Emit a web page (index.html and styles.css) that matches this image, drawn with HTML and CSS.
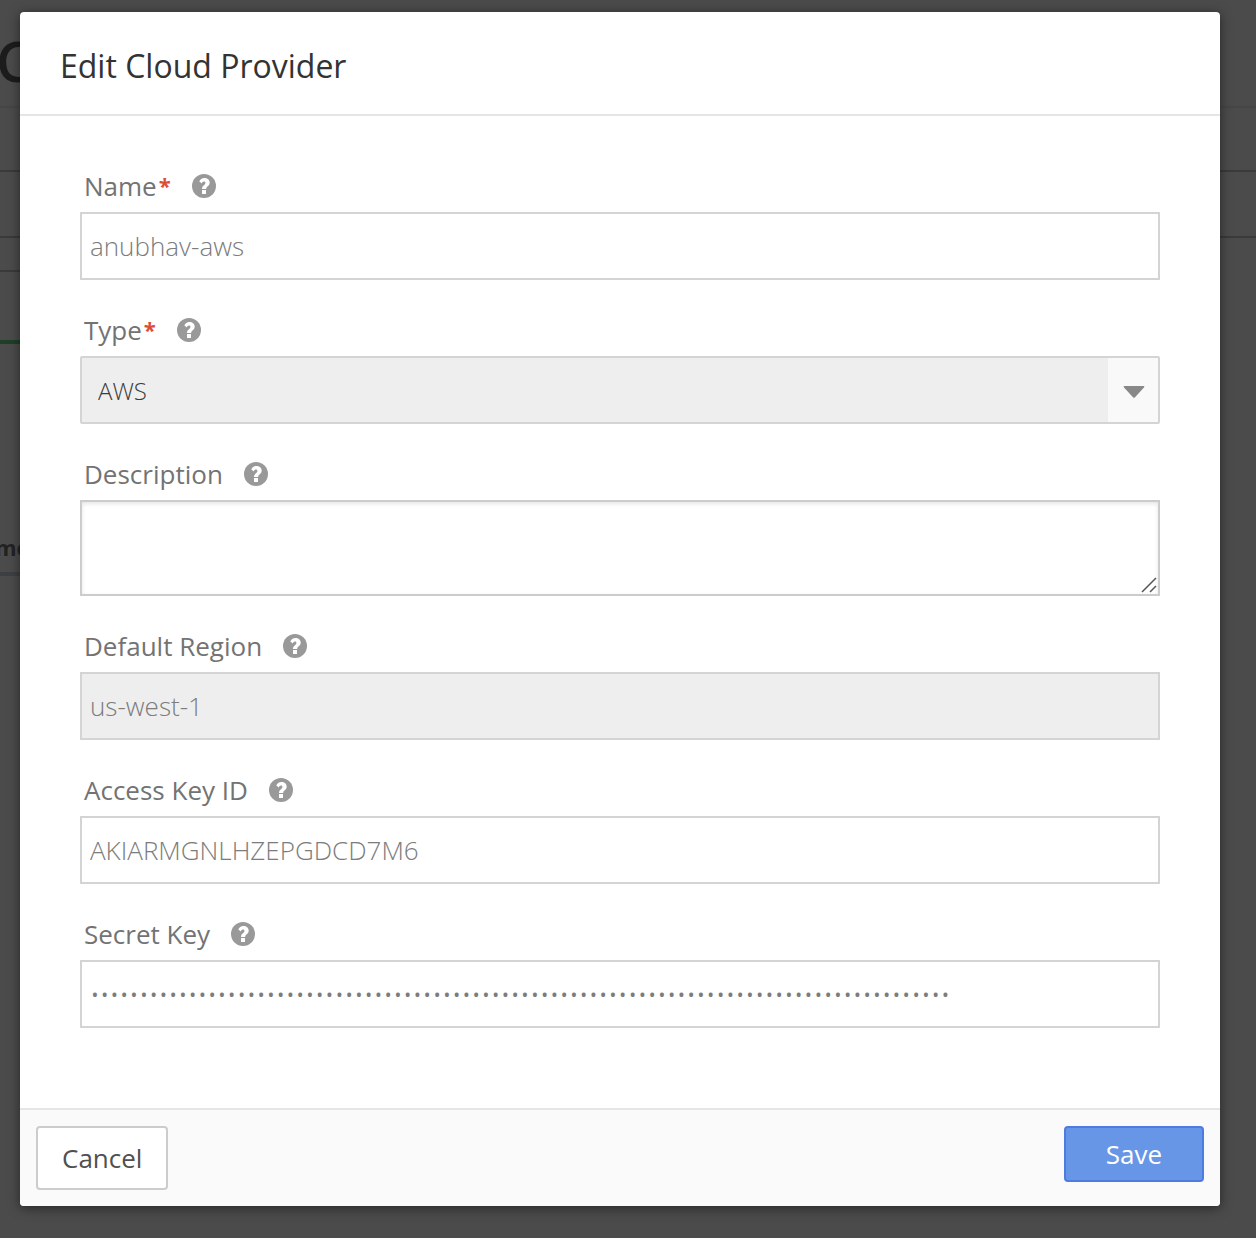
FILE: index.html
```html
<!DOCTYPE html>
<html lang="en">
<head>
  <meta charset="utf-8">
  <meta name="viewport" content="width=device-width, initial-scale=1">
  <title>Edit Cloud Provider</title>
  <link rel="stylesheet" href="styles.css">
</head>
<body>
  <svg class="sprite" aria-hidden="true">
    <symbol id="help" viewBox="0 0 24 24">
      <circle cx="12" cy="12" r="12" fill="#999"/>
      <path d="M7.300 7.600C8.300 5.200 9.900 4 12.300 4C15.500 4 17.700 6 17.700 8.600C17.700 12.300 14.200 12.300 14.200 15H10C10 11.300 13.400 11.200 13.400 9C13.400 8.100 12.800 7.600 11.900 7.600C10.900 7.600 10.300 8.300 9.900 9.400Z" fill="#fff"/>
      <rect x="10" y="16" width="4" height="4" fill="#fff"/>
    </symbol>
  </svg>

  <div class="page" aria-hidden="true">
    <div class="page-title">C</div>
    <div class="page-row"></div>
    <div class="page-row"></div>
    <div class="page-side">
      <div class="page-strip"></div>
      <div class="page-tabs"></div>
      <div class="page-columns">me</div>
    </div>
  </div>

  <form class="modal" role="dialog" aria-labelledby="modal-title">
    <header class="modal-header">
      <h1 id="modal-title">Edit Cloud Provider</h1>
    </header>

    <div class="modal-body">
      <div class="field">
        <div class="field-label">
          <label for="name">Name<span class="required">*</span></label>
          <svg class="help"><use href="#help"/></svg>
        </div>
        <input class="control" id="name" type="text" value="anubhav-aws">
      </div>

      <div class="field">
        <div class="field-label">
          <label for="type">Type<span class="required">*</span></label>
          <svg class="help"><use href="#help"/></svg>
        </div>
        <div class="stack">
          <select class="control select" id="type" disabled>
            <option>AWS</option>
          </select>
          <span class="select-arrow">
            <svg width="22" height="12" viewBox="0 0 22 12"><path d="M1.500 0H20.500Q22 0 21 1.500L12 11.300Q11 12.400 10 11.300L1 1.500Q0 0 1.500 0Z" fill="#888"/></svg>
          </span>
        </div>
      </div>

      <div class="field">
        <div class="field-label">
          <label for="description">Description</label>
          <svg class="help"><use href="#help"/></svg>
        </div>
        <div class="stack">
          <textarea class="control textarea" id="description"></textarea>
          <svg class="grip" width="16" height="16" viewBox="0 0 16 16"><path d="M1 15L15 1M9 15L15 9" stroke="#555" stroke-width="1.500"/></svg>
        </div>
      </div>

      <div class="field">
        <div class="field-label">
          <label for="region">Default Region</label>
          <svg class="help"><use href="#help"/></svg>
        </div>
        <input class="control" id="region" type="text" value="us-west-1" disabled>
      </div>

      <div class="field">
        <div class="field-label">
          <label for="access-key">Access Key ID</label>
          <svg class="help"><use href="#help"/></svg>
        </div>
        <input class="control" id="access-key" type="text" value="AKIARMGNLHZEPGDCD7M6">
      </div>

      <div class="field">
        <div class="field-label">
          <label for="secret-key">Secret Key</label>
          <svg class="help"><use href="#help"/></svg>
        </div>
        <input class="control" id="secret-key" type="password" value="0000000000000000000000000000000000000000000000000000000000000000000000000000000000000000">
      </div>
    </div>

    <footer class="modal-footer">
      <button class="button cancel" type="button">Cancel</button>
      <button class="button save" type="submit">Save</button>
    </footer>
  </form>
</body>
</html>
```
FILE: styles.css
```css
* {
  box-sizing: border-box;
}

body {
  display: grid;
  grid-template-columns: minmax(0, 1fr);
  min-height: 100vh;
  margin: 0;
  background: #4b4b4b;
  font-family: "Open Sans", "Noto Sans", sans-serif;
}

.sprite {
  position: absolute;
  width: 0;
  height: 0;
}

/* Dimmed page under the dialog */
.page,
.modal {
  grid-area: 1 / 1;
}

.page {
  overflow: hidden;
}

.page-title {
  height: 108px;
  padding-top: 14px;
  border-bottom: 2px solid #464646;
  margin-left: -4px;
  color: #1c1c1c;
  font-size: 56px;
  font-weight: 600;
  line-height: 92px;
}

.page-row {
  height: 64px;
  border-bottom: 2px solid #3a3a3a;
}

.page-row + .page-row {
  height: 66px;
}

.page-side {
  width: 50%;
}

.page-strip {
  height: 34px;
  border-bottom: 2px solid #3a3a3a;
}

.page-tabs {
  height: 72px;
  border-bottom: 4px solid #1f3f28;
}

.page-columns {
  height: 232px;
  padding-top: 188px;
  border-bottom: 4px solid #3c4043;
  margin-left: -5px;
  color: #222;
  font-size: 22px;
  font-weight: 700;
  line-height: 30px;
}

/* Dialog */
.modal {
  position: relative;
  align-self: start;
  margin: 12px 36px 32px 20px;
  border-radius: 4px;
  background: #fff;
  box-shadow: 0 2px 12px rgba(0, 0, 0, 0.5);
}

.modal-header {
  padding: 32px 40px 26px;
  border-bottom: 2px solid #e5e5e5;
}

.modal-header h1 {
  margin: 0;
  color: #333;
  font-size: 32px;
  font-weight: 400;
  line-height: 44px;
}

.modal-body {
  display: flex;
  flex-direction: column;
  gap: 32px;
  padding: 52px 60px 80px;
}

.field {
  display: flex;
  flex-direction: column;
  gap: 8px;
}

.field-label {
  display: flex;
  align-items: center;
  gap: 21px;
  padding-left: 4px;
  color: #737373;
  font-size: 26px;
  line-height: 36px;
}

.required {
  margin-left: 2px;
  color: #dd4b39;
  font-size: 22px;
  font-weight: 700;
  line-height: 20px;
  vertical-align: 2px;
}

.help {
  width: 24px;
  height: 24px;
}

.control {
  width: 100%;
  height: 68px;
  padding: 0 8px;
  border: 2px solid #d4d4d4;
  border-radius: 0;
  margin: 0;
  background: #fff;
  color: #7c7c7c;
  font-family: inherit;
  font-size: 26px;
  font-weight: 300;
  opacity: 1;
}

.control:disabled {
  background: #eee;
}

.stack {
  display: grid;
}

.stack > * {
  grid-area: 1 / 1;
}

.control.select {
  padding: 0 16px;
  border-radius: 2px;
  appearance: none;
  color: #3c3c3c;
  font-size: 24px;
}

.select-arrow {
  display: grid;
  place-items: center;
  justify-self: end;
  width: 50px;
  padding: 4px 0 0 2px;
  margin: 2px;
  background: #f9f9f9;
  pointer-events: none;
}

.textarea {
  display: block;
  height: 96px;
  border-color: #ccc;
  box-shadow: inset 0 2px 4px rgba(0, 0, 0, 0.1);
  resize: vertical;
}

.textarea::-webkit-resizer {
  background: transparent;
}

.grip {
  place-self: end;
  margin: 3px;
  pointer-events: none;
}

.modal-footer {
  display: flex;
  align-items: flex-start;
  justify-content: space-between;
  padding: 16px;
  border-top: 2px solid #e5e5e5;
  border-radius: 0 0 4px 4px;
  background: #fafafa;
}

.button {
  border: 2px solid #ccc;
  border-radius: 4px;
  font-family: inherit;
  font-size: 26px;
  line-height: 36px;
}

.cancel {
  padding: 12px 24px;
  background: #fff;
  color: #505050;
}

.save {
  min-width: 140px;
  padding: 8px 24px;
  border-color: #4d7be0;
  background: #6796e6;
  color: #fff;
}
```
